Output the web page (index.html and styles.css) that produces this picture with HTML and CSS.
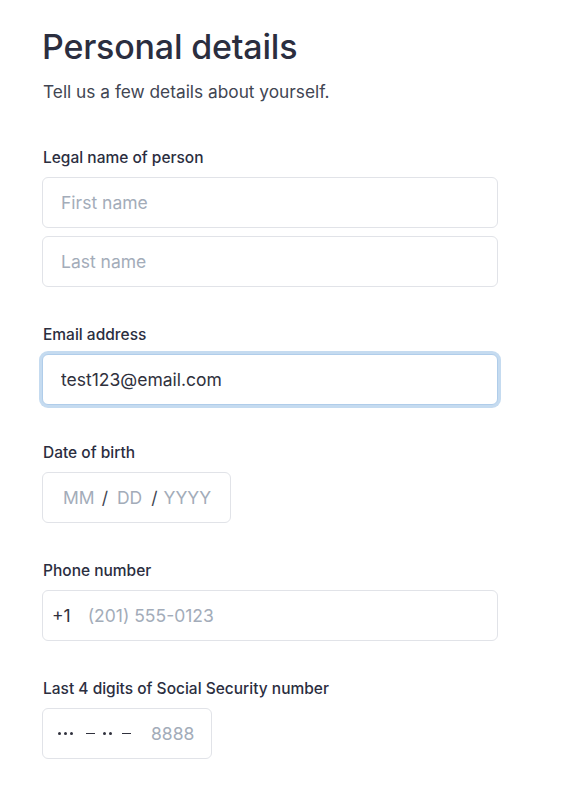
FILE: index.html
```html
<!DOCTYPE html>
<html lang="en">
<head>
<meta charset="utf-8">
<title>Personal details</title>
<link rel="stylesheet" href="styles.css">
</head>
<body>
<main class="page">
  <h1 class="title">Personal details</h1>
  <p class="subtitle">Tell us a few details about yourself.</p>

  <form class="form">
    <div class="field">
      <label class="label">Legal name of person</label>
      <div class="stack">
        <input class="input" type="text" placeholder="First name">
        <input class="input" type="text" placeholder="Last name">
      </div>
    </div>

    <div class="field">
      <label class="label">Email address</label>
      <input class="input input-focused" type="email" value="test123@email.com">
    </div>

    <div class="field">
      <label class="label">Date of birth</label>
      <div class="box box-date">
        <span class="ph">MM</span>
        <span class="sep sep-1">/</span>
        <span class="ph">DD</span>
        <span class="sep sep-2">/</span>
        <span class="ph">YYYY</span>
      </div>
    </div>

    <div class="field">
      <label class="label">Phone number</label>
      <div class="box box-phone">
        <span class="prefix">+1</span>
        <span class="ph">(201) 555-0123</span>
      </div>
    </div>

    <div class="field">
      <label class="label">Last 4 digits of Social Security number</label>
      <div class="box box-ssn">
        <span class="mask">
          <span class="dots"><i class="dot"></i><i class="dot"></i><i class="dot"></i></span>
          <span class="dash dash-1"></span>
          <span class="dots dots-2"><i class="dot"></i><i class="dot"></i></span>
          <span class="dash dash-2"></span>
        </span>
        <span class="ph ssn-ph">8888</span>
      </div>
    </div>
  </form>
</main>
</body>
</html>
```

FILE: styles.css
```css
* { box-sizing: border-box; }

html, body {
  margin: 0;
  padding: 0;
  background: #ffffff;
}

body {
  font-family: Inter, "Noto Sans", "Liberation Sans", sans-serif;
  color: #30313d;
  -webkit-font-smoothing: antialiased;
}

.page {
  padding: 27px 42px 40px 42px;
  width: 540px;
}

.title {
  margin: 0;
  font-size: 34px;
  line-height: 40px;
  font-weight: 500;
  color: #2b2e3f;
  letter-spacing: -0.2px;
}

.subtitle {
  margin: 13px 0 0 1px;
  font-size: 17.3px;
  line-height: 24px;
  color: #414552;
}

.form {
  display: flex;
  flex-direction: column;
  gap: 38px;
  margin-top: 44px;
}

.field {
  display: flex;
  flex-direction: column;
}

.label {
  display: block;
  font-size: 15.5px;
  line-height: 20px;
  font-weight: 500;
  color: #2b2e3f;
  margin: 0 0 9px 1px;
}

.stack {
  display: flex;
  flex-direction: column;
  gap: 8px;
}

.input {
  display: block;
  width: 456px;
  height: 51px;
  margin: 0;
  padding: 0 18px;
  border: 1px solid #e1e3e8;
  border-radius: 6px;
  background: #fff;
  font-family: inherit;
  font-size: 17.5px;
  color: #30313d;
  outline: none;
}

.input::placeholder {
  color: #a3acb9;
  opacity: 1;
}

.input-focused {
  border-color: #b0cdea;
  box-shadow: 0 0 0 3px #c5dbf0;
}

.box {
  display: flex;
  align-items: center;
  height: 51px;
  border: 1px solid #e1e3e8;
  border-radius: 6px;
  background: #fff;
  font-size: 17.5px;
  white-space: nowrap;
}

.ph { color: #a3acb9; }

.box-date {
  width: 189px;
  padding-left: 20px;
}

.sep {
  color: #414552;
}

.sep-1 { margin: 0 9px 0 7px; }
.sep-2 { margin: 0 6px 0 9px; }

.box-phone {
  width: 456px;
  padding-left: 9px;
}

.prefix {
  color: #30313d;
  margin-right: 17px;
}

.box-ssn {
  width: 170px;
  padding-left: 14.5px;
}

.mask {
  display: flex;
  align-items: center;
  flex: none;
}

.dots {
  display: flex;
  align-items: center;
  gap: 3px;
  flex: none;
}

.dot {
  display: block;
  flex: none;
  width: 3px;
  height: 3px;
  border-radius: 50%;
  background: #30313d;
}

.dash {
  display: block;
  flex: none;
  width: 9px;
  height: 1.5px;
  background: #30313d;
}

.dash-1 { margin-left: 13.5px; }
.dots-2 { margin-left: 7.5px; }
.dash-2 { margin-left: 10.5px; }

.ssn-ph { margin-left: 20px; }
```
